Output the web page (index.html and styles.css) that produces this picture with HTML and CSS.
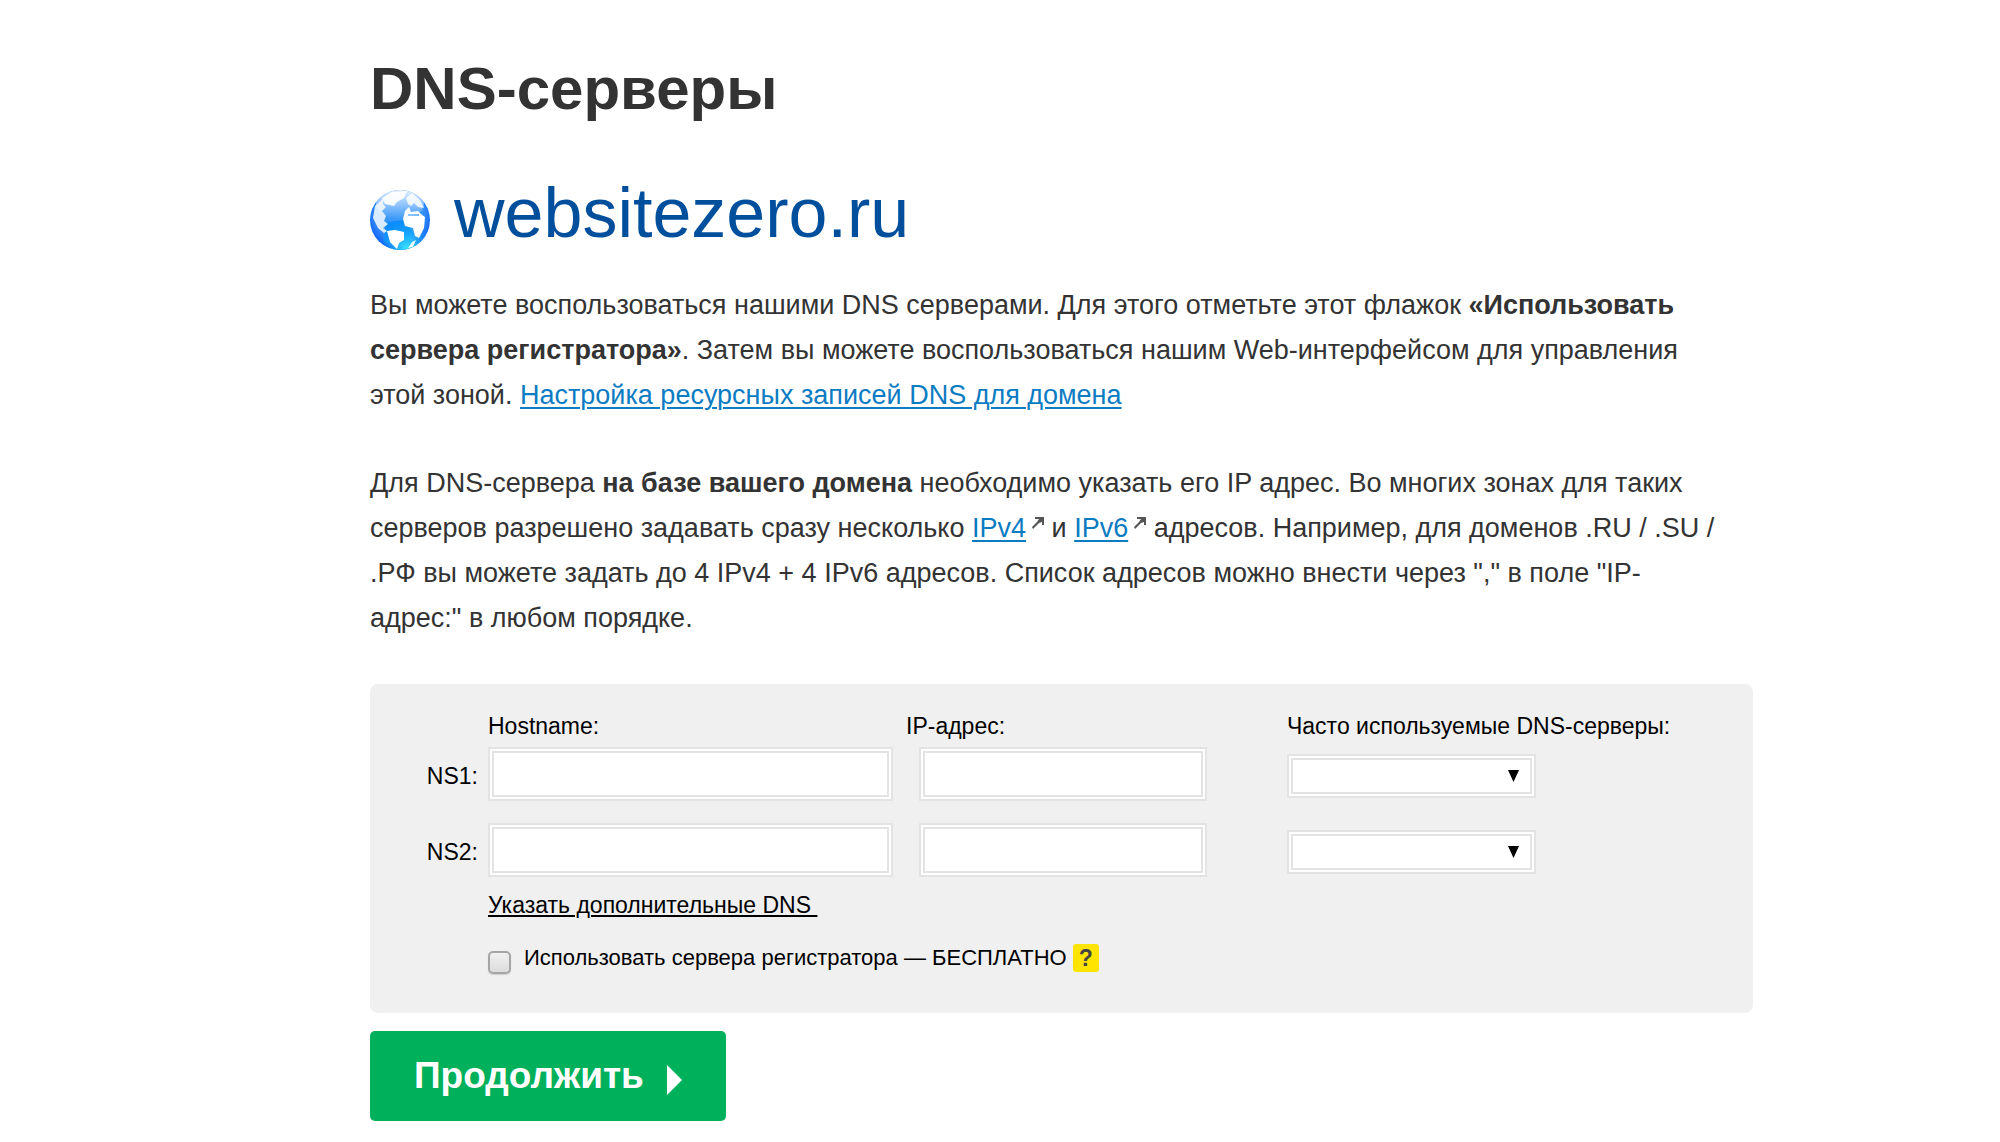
FILE: index.html
```html
<!DOCTYPE html>
<html lang="ru">
<head>
<meta charset="utf-8">
<meta name="viewport" content="width=device-width, initial-scale=1">
<title>DNS-серверы</title>
<link rel="stylesheet" href="styles.css">
</head>
<body>
<svg class="sprite" aria-hidden="true">
  <symbol id="external" viewBox="0 0 12 12">
    <path d="M3 0H12V8H10V5L7 6L1 12L0 10L5 5L7 2H3Z" fill="#555"/>
  </symbol>
</svg>
<main class="page">
  <h1 class="title">DNS-серверы</h1>

  <div class="domain">
    <svg class="globe" viewBox="0 0 60 60" aria-hidden="true">
      <defs>
        <radialGradient id="sea" cx="0.5" cy="0.42" r="0.58">
          <stop offset="0" stop-color="#3d9bf8"/>
          <stop offset="0.65" stop-color="#3a95fb"/>
          <stop offset="1" stop-color="#0a5cf0"/>
        </radialGradient>
        <linearGradient id="shine" x1="0" y1="0" x2="0" y2="1">
          <stop offset="0" stop-color="#fff" stop-opacity="0.9"/>
          <stop offset="1" stop-color="#fff" stop-opacity="0"/>
        </linearGradient>
        <radialGradient id="glow" cx="0.62" cy="1" r="0.5">
          <stop offset="0" stop-color="#3ff0ff"/>
          <stop offset="1" stop-color="#10a0ff" stop-opacity="0"/>
        </radialGradient>
        <clipPath id="disc"><circle cx="30" cy="30" r="30"/></clipPath>
      </defs>
      <g clip-path="url(#disc)">
        <rect width="60" height="60" fill="url(#sea)"/>
        <path d="M16 32L34 30L44 44L36 58L14 52Z" fill="#0d8dff"/>
        <rect width="60" height="60" fill="url(#glow)"/>
        <path d="M5 16L14 8L13 14L16 17L12 21L16 26L14 31L18 34L13 38L17 41L14 43L8 38L3 28Z" fill="#d9ecff"/>
        <path d="M12 8L22 2L37 1L34 8L27 12L24 16L15 14Z" fill="#f0f7ff"/>
        <path d="M36 8L42 3L50 10L54 18L48 17L44 13L41 16L38 14Z" fill="#dcecff"/>
        <path d="M35 21L39 17L41 22L48 21L52 25L55 27L54 38L49 48L45 46L43 38L35 36L33 29Z" fill="#fff"/>
        <path d="M38 24H49V26H38Z" fill="#77b8ff"/>
        <path d="M17 41L25 40L34 42L34 50L29 53L27 59L20 52Z" fill="#fff"/>
        <path d="M38 58L42 52L46 50L43 57Z" fill="#e4fbff"/>
        <ellipse cx="30" cy="14" rx="24" ry="15" fill="url(#shine)"/>
      </g>
    </svg>
    <span class="domain-name">websitezero.ru</span>
  </div>

  <div class="intro">
    <p>Вы можете воспользоваться нашими DNS серверами. Для этого отметьте этот флажок <b>«Использовать сервера регистратора»</b>. Затем вы можете воспользоваться нашим Web-интерфейсом для управления этой зоной. <a href="#">Настройка ресурсных записей DNS для домена</a></p>
    <p>Для DNS-сервера <b>на базе вашего домена</b> необходимо указать его IP адрес. Во многих зонах для таких серверов разрешено задавать сразу несколько <a href="#">IPv4</a><svg class="external" aria-hidden="true"><use href="#external"/></svg> и <a href="#">IPv6</a><svg class="external" aria-hidden="true"><use href="#external"/></svg> адресов. Например, для доменов .RU / .SU / .РФ вы можете задать до 4 IPv4 + 4 IPv6 адресов. Список адресов можно внести через "," в поле "IP-адрес:" в любом порядке.</p>
  </div>

  <form>
    <div class="panel">
      <div class="servers">
        <span class="head head-host" id="host">Hostname:</span>
        <span class="head" id="ip">IP-адрес:</span>
        <span class="head" id="common">Часто используемые DNS-серверы:</span>

        <label class="ns" for="ns1">NS1:</label>
        <input class="field field-host" id="ns1" type="text">
        <input class="field field-ip" type="text" aria-labelledby="ip">
        <span class="picker"><select class="select" aria-labelledby="common"><option></option></select></span>

        <label class="ns" for="ns2">NS2:</label>
        <input class="field field-host" id="ns2" type="text">
        <input class="field field-ip" type="text" aria-labelledby="ip">
        <span class="picker"><select class="select" aria-labelledby="common"><option></option></select></span>
      </div>
      <div class="extras">
        <a class="more" href="#">Указать дополнительные DNS&nbsp;</a>
        <div class="option">
          <input class="check" id="own" type="checkbox">
          <label for="own">Использовать сервера регистратора — БЕСПЛАТНО</label>
          <button class="help" type="button">?</button>
        </div>
      </div>
    </div>
    <button class="submit" type="submit">Продолжить
      <svg class="play" viewBox="0 0 15 30" aria-hidden="true"><path d="M0 0L15 15L0 30Z" fill="#fff"/></svg>
    </button>
  </form>
</main>
</body>
</html>
```
FILE: styles.css
```css
* {
  box-sizing: border-box;
}

body {
  margin: 0;
  background: #fff;
  color: #333;
  font-family: "Liberation Sans", Arial, sans-serif;
  font-size: 27px;
  line-height: 45px;
}

.sprite {
  display: none;
}

.page {
  margin: 0 247px 0 370px;
  padding: 51px 0 20px;
}

.title {
  margin: 0;
  font-size: 60px;
  line-height: 76px;
}

.domain {
  display: flex;
  align-items: flex-end;
  gap: 24px;
  margin-top: 48px;
}

.globe {
  width: 60px;
  height: 60px;
  margin-bottom: 1px;
}

.domain-name {
  color: #004f9c;
  font-size: 70px;
  line-height: 76px;
}

.intro {
  max-width: 1350px;
  margin-top: 32px;
}

.intro p {
  margin: 0 0 43px;
}

.intro a {
  color: #0c7cc2;
  text-decoration-thickness: 2px;
  text-underline-offset: 3px;
}

.external {
  width: 12px;
  height: 12px;
  margin: 0 0 8px 6px;
}

.panel {
  padding: 28px 24px 39px 0;
  border-radius: 8px;
  background: #f0f0f0;
  color: #000;
  font-size: 23px;
  line-height: 28px;
}

.servers {
  display: grid;
  grid-template-columns: 118px 418px 381px 1fr;
  align-items: center;
  row-gap: 22px;
}

.head {
  margin-bottom: -15px;
}

.head-host {
  grid-column: 2;
}

.ns {
  padding: 4px 10px 0 0;
  text-align: right;
}

.field,
.select {
  border: 6px double #e3e3e3;
  border-radius: 0;
  background-color: #fff;
  color: #000;
  font: inherit;
}

.field {
  height: 54px;
  padding: 0 8px;
}

.field-host {
  width: 405px;
}

.field-ip {
  width: 288px;
  margin-left: 13px;
}

.picker {
  display: grid;
  width: 249px;
  padding-top: 4px;
}

.picker::after {
  content: "";
  grid-area: 1 / 1;
  align-self: center;
  justify-self: end;
  width: 11px;
  height: 12px;
  margin-right: 17px;
  background: #000;
  clip-path: polygon(0 0, 100% 0, 50% 100%);
  pointer-events: none;
}

.select {
  grid-area: 1 / 1;
  width: 100%;
  height: 44px;
  appearance: none;
}

.extras {
  padding: 14px 0 0 118px;
}

.more {
  color: #000;
  text-decoration-thickness: 2px;
  text-underline-offset: 2px;
}

.option {
  display: flex;
  align-items: center;
  margin-top: 22px;
  font-size: 22px;
}

.check {
  width: 23px;
  height: 23px;
  margin: 10px 13px 0 0;
  border: 2px solid #a5a5a5;
  border-radius: 5px;
  background: linear-gradient(#f0f0f0, #dcdcdc);
  box-shadow: 0 1px 1px #ccc;
  appearance: none;
}

.check:checked {
  background: #555;
}

.help {
  width: 26px;
  height: 28px;
  margin-left: 6px;
  padding: 0;
  border: 0;
  border-radius: 3px;
  background: #ffe400;
  color: #444;
  font: bold 23px/26px "Liberation Sans", Arial, sans-serif;
}

.submit {
  display: flex;
  align-items: center;
  gap: 23px;
  height: 90px;
  margin-top: 18px;
  padding: 0 44px;
  border: 0;
  border-radius: 5px;
  background: #00b05a;
  color: #fff;
  font: bold 37px/44px "Liberation Sans", Arial, sans-serif;
}

.play {
  width: 15px;
  height: 30px;
  margin-top: 8px;
}
```
